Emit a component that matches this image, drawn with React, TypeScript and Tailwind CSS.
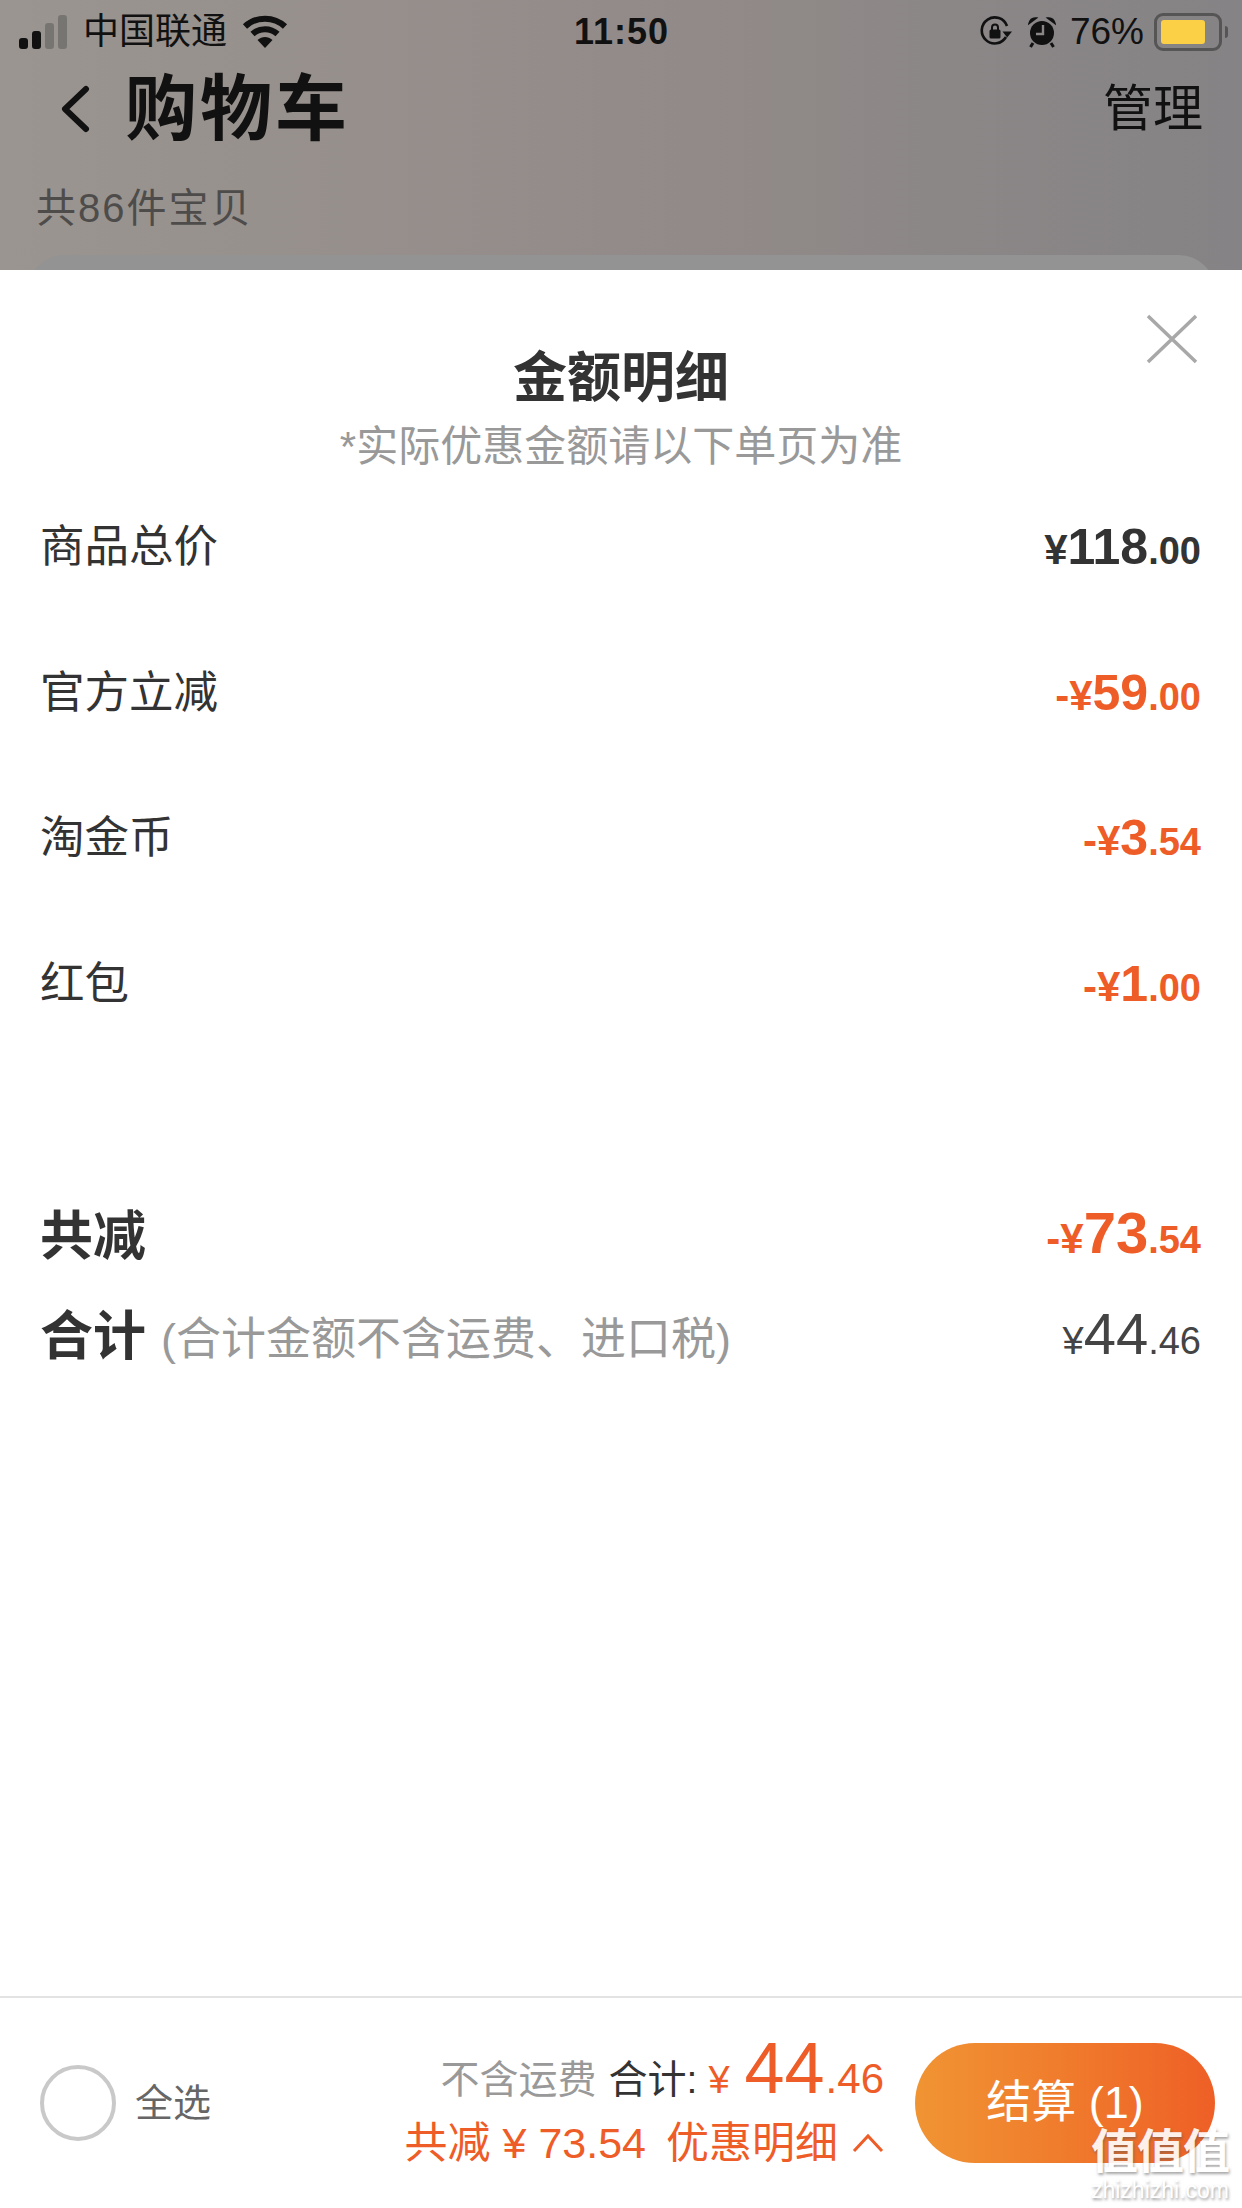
const FONT = "font-['Liberation_Sans','Noto_Sans_CJK_SC',sans-serif]";

const Signal = () => (
  <div className="flex items-end gap-[4px]">
    <div className="h-[11px] w-[9px] rounded-[3px] bg-[#111]" />
    <div className="h-[18px] w-[9px] rounded-[3px] bg-[#111]" />
    <div className="h-[26px] w-[9px] rounded-[3px] bg-[#777572]" />
    <div className="h-[34px] w-[9px] rounded-[3px] bg-[#777572]" />
  </div>
);

const Wifi = () => (
  <svg width="46" height="34" viewBox="0 0 46 34" fill="none">
    <path d="M3 11.5C14 1 32 1 43 11.5" stroke="#111" strokeWidth="6" />
    <path d="M10.5 19C17.5 12.5 28.5 12.5 35.5 19" stroke="#111" strokeWidth="6" />
    <path d="M15.5 25C20 21 26 21 30.5 25L23 33Z" fill="#111" />
  </svg>
);

const RotationLock = () => (
  <svg width="32" height="32" viewBox="0 0 32 32" fill="none">
    <path d="M26 21A13 13 0 1 1 27 10" stroke="#111" strokeWidth="2.6" />
    <path d="M22.5 15.5H32L27.2 21.5Z" fill="#111" />
    <rect x="9.5" y="13.5" width="11" height="9" rx="1.5" fill="#111" />
    <path d="M12 14V11.5a3 3 0 0 1 6 0V14" stroke="#111" strokeWidth="2" />
  </svg>
);

const Alarm = () => (
  <svg width="28" height="32" viewBox="0 0 28 32" fill="none">
    <circle cx="14" cy="17" r="12" fill="#111" />
    <path d="M1 7.5C2 3.5 5 1.5 8.5 2ZM27 7.5C26 3.5 23 1.5 19.5 2Z" fill="#111" stroke="#111" strokeWidth="1.5" />
    <path d="M5 27L2.5 31M23 27L25.5 31" stroke="#111" strokeWidth="3" />
    <path d="M15 9V18H8" stroke="#8a8786" strokeWidth="2.4" />
  </svg>
);

const Battery = () => (
  <div className="flex items-center gap-[3px]">
    <div className="flex h-[38px] w-[68px] items-center rounded-[9px] border-[3px] border-[#555] p-[4px]">
      <div className="h-full w-[44px] rounded-[3px] bg-[#fbcf46]" />
    </div>
    <div className="h-[12px] w-[3px] rounded-r-[3px] bg-[#555]" />
  </div>
);

type PriceProps = {
  prefix: string;
  whole: string;
  cents: string;
  color: string;
  big?: boolean;
};

const Price = ({ prefix, whole, cents, color, big }: PriceProps) => (
  <div className={`flex items-baseline font-bold ${color} ${big ? "mb-[10px]" : ""}`}>
    <span className="text-[42px]">{prefix}</span>
    <span className={big ? "text-[58px]" : "text-[50px]"}>{whole}</span>
    <span className="text-[38px]">{cents}</span>
  </div>
);

const ROWS = [
  { label: "商品总价", prefix: "¥", whole: "118", cents: ".00", color: "text-[#333]" },
  { label: "官方立减", prefix: "-¥", whole: "59", cents: ".00", color: "text-[#ee5c27]" },
  { label: "淘金币", prefix: "-¥", whole: "3", cents: ".54", color: "text-[#ee5c27]" },
  { label: "红包", prefix: "-¥", whole: "1", cents: ".00", color: "text-[#ee5c27]" },
];

export default function App() {
  return (
    <div className={`${FONT} relative flex h-[2208px] w-[1242px] flex-col overflow-hidden bg-white`}>
      {/* Dimmed cart page behind the sheet */}
      <header className="flex h-[270px] shrink-0 flex-col overflow-hidden bg-gradient-to-r from-[#9a9591] via-[#938b89] to-[#858385]">
        <div className="flex h-[62px] shrink-0 items-center justify-between pl-[19px] pr-[14px] pt-[2px]">
          <div className="flex w-[400px] items-center">
            <Signal />
            <span className="ml-[16px] text-[36px] text-[#111]">中国联通</span>
            <span className="ml-[15px]"><Wifi /></span>
          </div>
          <span className="mr-[4px] text-[36px] font-bold tracking-[1px] text-[#111]">11:50</span>
          <div className="flex w-[400px] items-center justify-end">
            <RotationLock />
            <span className="ml-[16px]"><Alarm /></span>
            <span className="ml-[14px] text-[37px] text-[#111]">76%</span>
            <span className="ml-[10px]"><Battery /></span>
          </div>
        </div>
        <div className="flex h-[94px] shrink-0 items-center justify-between pl-[60px] pr-[39px]">
          <div className="flex items-center">
            <svg width="30" height="48" viewBox="0 0 30 48" fill="none">
              <path d="M26 4L5 24L26 44" stroke="#111" strokeWidth="6" strokeLinecap="round" strokeLinejoin="round" />
            </svg>
            <span className="ml-[35px] text-[72px] font-bold tracking-[3px] text-[#111]">购物车</span>
          </div>
          <span className="text-[50px] text-[#111]">管理</span>
        </div>
        <div className="mt-[17px] shrink-0 pl-[36px] text-[40px] leading-[70px] tracking-[2px] text-[#4e4c4a]">共86件宝贝</div>
        <div className="ml-[28px] mr-[27px] mt-[12px] h-[40px] shrink-0 rounded-t-[36px] bg-[#939393]" />
      </header>

      {/* Amount details sheet */}
      <section className="relative flex flex-1 flex-col bg-white">
        <button className="absolute right-[44px] top-[44px]">
          <svg width="52" height="50" viewBox="0 0 52 50" fill="none">
            <path d="M2 2L50 48M50 2L2 48" stroke="#a8a8a8" strokeWidth="3.5" />
          </svg>
        </button>

        <h1 className="mt-[78px] text-center text-[54px] font-bold leading-[60px] text-[#333]">金额明细</h1>
        <p className="mt-[14px] text-center text-[42px] leading-[50px] text-[#999]">*实际优惠金额请以下单页为准</p>

        <div className="flex flex-col px-[40px] pr-[41px] pt-[3px]">
          {ROWS.map((row) => (
            <div key={row.label} className="flex h-[145.5px] items-center justify-between">
              <span className="text-[44.5px] text-[#333]">{row.label}</span>
              <Price prefix={row.prefix} whole={row.whole} cents={row.cents} color={row.color} />
            </div>
          ))}

          <div className="mt-[145px] flex h-[70px] items-center justify-between">
            <span className="text-[53px] font-bold text-[#333]">共减</span>
            <Price prefix="-¥" whole="73" cents=".54" color="text-[#ee5c27]" big />
          </div>
          <div className="mt-[30px] flex h-[70px] items-center justify-between">
            <div className="flex items-baseline">
              <span className="text-[53px] font-bold text-[#333]">合计</span>
              <span className="ml-[15px] text-[45px] text-[#999]">(合计金额不含运费、进口税)</span>
            </div>
            <div className="mb-[8px] flex items-baseline text-[#444]">
              <span className="text-[38px]">¥</span>
              <span className="text-[58px]">44</span>
              <span className="text-[38px]">.46</span>
            </div>
          </div>
        </div>
      </section>

      {/* Bottom checkout bar */}
      <footer className="flex h-[212px] shrink-0 items-center justify-between border-t-2 border-[#e3e3e3] bg-white pl-[40px] pr-[27px]">
        <div className="flex items-center">
          <div className="h-[76px] w-[76px] rounded-full border-[4px] border-[#c9c9c9]" />
          <span className="ml-[19px] text-[38px] text-[#666]">全选</span>
        </div>
        <div className="flex items-center">
          <div className="mb-[2px] flex flex-col items-end">
            <div className="flex h-[66px] items-baseline leading-none">
              <span className="text-[39px] text-[#999]">不含运费</span>
              <span className="ml-[12px] text-[39px] text-[#333]">合计:</span>
              <span className="ml-[11px] text-[38px] text-[#ee5c27]">¥</span>
              <span className="ml-[15px] text-[72px] text-[#ee5c27]">44</span>
              <span className="ml-[1px] text-[42px] text-[#ee5c27]">.46</span>
            </div>
            <div className="mt-[16px] flex h-[58px] items-center text-[43px] leading-none text-[#ee5c27]">
              <span>共减 ¥ 73.54</span>
              <span className="ml-[20px]">优惠明细</span>
              <svg className="ml-[14px]" width="32" height="20" viewBox="0 0 32 20" fill="none">
                <path d="M2 18L16 3L30 18" stroke="#ee5c27" strokeWidth="3" />
              </svg>
            </div>
          </div>
          <button className="ml-[31px] flex h-[120px] w-[300px] items-center justify-center rounded-full bg-gradient-to-r from-[#f09433] to-[#ee5f26] text-[45px] text-white">
            结算 (1)
          </button>
        </div>
      </footer>

      {/* Site watermark */}
      <div className="absolute bottom-[6px] right-[13px] flex flex-col items-center text-white [text-shadow:1px_2px_3px_rgba(90,90,90,0.6)]">
        <span className="text-[47px] font-bold leading-[52px] tracking-[-1px] opacity-90">值值值</span>
        <span className="text-[23px] leading-[24px]">zhizhizhi.com</span>
      </div>
    </div>
  );
}
